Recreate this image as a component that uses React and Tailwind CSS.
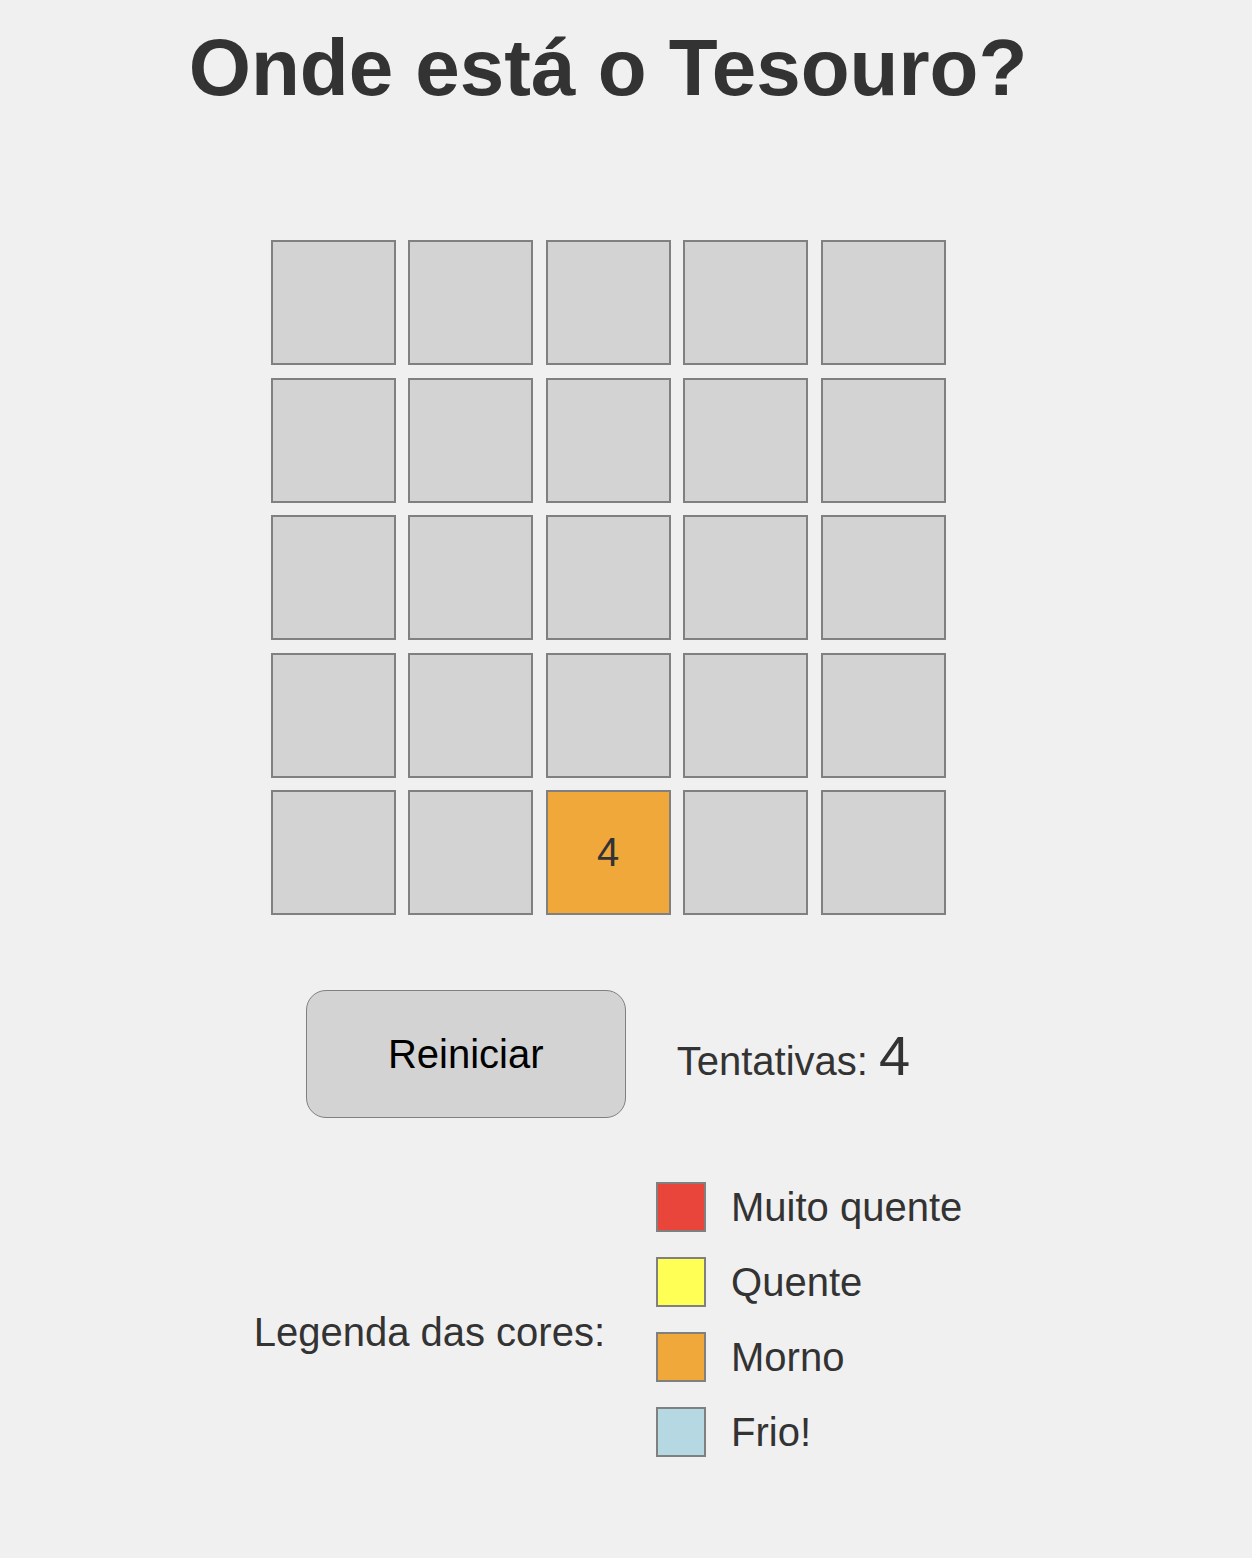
import React, { useState } from "react";

const SIZE = 5;
const TREASURE = { row: 1, col: 1 };

const legend = [
  { label: "Muito quente", color: "bg-[#e9453b]" },
  { label: "Quente", color: "bg-[#ffff55]" },
  { label: "Morno", color: "bg-[#f0a83b]" },
  { label: "Frio!", color: "bg-[#b5d8e3]" },
];

const initialClicks = { "4-2": 4 };

const App = () => {
  const [clicks, setClicks] = useState(initialClicks);
  const [attempts, setAttempts] = useState(4);

  const hint = (row, col) => {
    const d = Math.abs(row - TREASURE.row) + Math.abs(col - TREASURE.col);
    if (d <= 1) return "bg-[#e9453b]";
    if (d <= 2) return "bg-[#ffff55]";
    if (d <= 4) return "bg-[#f0a83b]";
    return "bg-[#b5d8e3]";
  };

  const handleClick = (row, col) => {
    const key = `${row}-${col}`;
    if (clicks[key]) return;
    const next = attempts + 1;
    setAttempts(next);
    setClicks({ ...clicks, [key]: next });
  };

  const reset = () => {
    setClicks({});
    setAttempts(0);
  };

  return (
    <main
      className="min-h-[1558px] w-full bg-[#f0f0f0] text-[#333] leading-[normal]"
      style={{ fontFamily: '"Liberation Sans", Arial, sans-serif' }}
    >
      <div className="w-[1216px] flex flex-col items-center">
        <h1 className="pt-[28px] text-[80px] leading-none font-bold">
          Onde está o Tesouro?
        </h1>

        <div className="mt-[132px] grid grid-cols-5 gap-[12.5px]">
          {Array.from({ length: SIZE * SIZE }).map((_, i) => {
            const row = Math.floor(i / SIZE);
            const col = i % SIZE;
            const value = clicks[`${row}-${col}`];
            return (
              <button
                key={i}
                onClick={() => handleClick(row, col)}
                className={`w-[125px] h-[125px] border-2 border-[#808080] flex items-center justify-center text-[40px] leading-[normal] text-[#333] ${
                  value ? hint(row, col) : "bg-[#d3d3d3]"
                }`}
              >
                {value || ""}
              </button>
            );
          })}
        </div>

        <div className="mt-[75px] flex items-center gap-[51px]">
          <button
            onClick={reset}
            className="w-[320px] h-[128px] rounded-[20px] border-[1.5px] border-[#808080] bg-[#d3d3d3] text-black text-[40px] leading-[normal]"
          >
            Reiniciar
          </button>
          <p className="text-[40px] leading-[normal] mt-[3px]">
            Tentativas: <span className="text-[56px] leading-[normal]">{attempts}</span>
          </p>
        </div>

        <div className="mt-[64px] flex items-center gap-[51px]">
          <p className="text-[40px] leading-[normal]">Legenda das cores:</p>
          <ul>
            {legend.map((item) => (
              <li key={item.label} className="flex items-center gap-[25px] mb-[25px]">
                <span className={`w-[50px] h-[50px] border-2 border-[#808080] ${item.color}`} />
                <span className="text-[40px] leading-[normal]">{item.label}</span>
              </li>
            ))}
          </ul>
        </div>
      </div>
    </main>
  );
};

export default App;
